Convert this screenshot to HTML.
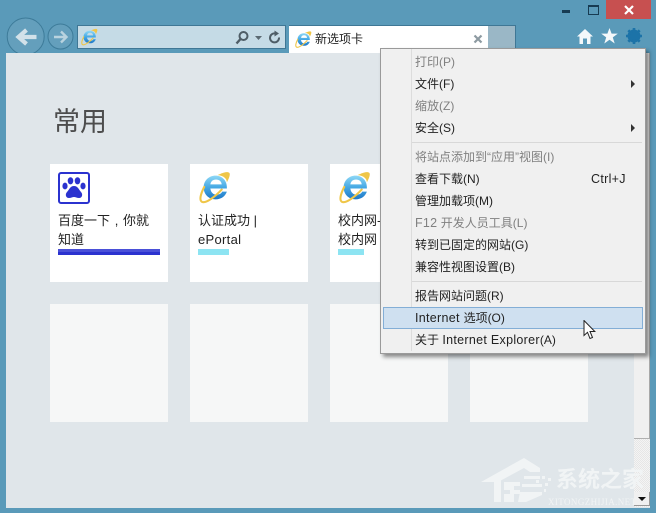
<!DOCTYPE html>
<html><head><meta charset="utf-8">
<style>
html,body{margin:0;padding:0}
body{width:656px;height:513px;overflow:hidden;position:relative;background:#5a9ab9;font-family:"Liberation Sans","Noto Sans CJK SC",sans-serif;color:#222}
.a{position:absolute}
.tile{position:absolute;width:118px;height:118px;background:#fff}
.e{background:#f6f7f7}
.tt{position:absolute;left:8px;top:47px;width:106px;font-size:13px;line-height:19px;color:#222;white-space:nowrap}
.bar{position:absolute;left:8px;top:85px;height:6px}
.m{position:absolute;left:415px;font-size:12px;line-height:18px;color:#222;white-space:nowrap}
.l{font-size:12.500px;letter-spacing:.3px}
.d{color:#808080}
.s{position:absolute;left:412px;width:230px;height:1px;background:#d8d8d8}
.ar{position:absolute;left:631px;width:0;height:0;border-left:4px solid #333;border-top:4px solid transparent;border-bottom:4px solid transparent}
</style></head><body>
<svg width="1" height="1" style="position:absolute;left:0;top:0"><defs>
<linearGradient id="eg" x1="0" y1="0" x2="0" y2="1"><stop offset="0" stop-color="#8ed8f5"/><stop offset=".5" stop-color="#45a8e4"/><stop offset="1" stop-color="#1f78c6"/></linearGradient>
<g id="ie">
<path d="M27 16.500H11C11.500 20.500 14 22.500 17 22.500C19.500 22.500 21.500 21.500 22.500 19.500H27C25.500 24 21.500 27 16 27C9.500 27 4.500 22 4.500 15.500C4.500 9 9.500 4 16 4C22.500 4 27 9 27 15C27 15.600 27 16 27 16.500ZM11 12.500H22C21.700 9.500 19.500 7.800 16.500 7.800C13.500 7.800 11.500 9.500 11 12.500Z" fill="url(#eg)" fill-rule="evenodd"/>
<path d="M5 15C1.500 22 0 28 3 29.500C7 31 16 24 22 17.500" fill="none" stroke="#efc648" stroke-width="2" stroke-linecap="round"/>
<path d="M18 3.500C23 1 28 -0.500 29.500 1.500C30.500 3 29 7 27 10.500C27 7 24 4 18 3.500Z" fill="#efc648"/>
</g>
</defs></svg>

<!-- nav (sits under the content sheet) -->
<svg class="a" style="left:0;top:10px" width="80" height="45" viewBox="0 0 80 45">
<circle cx="25.700" cy="26.500" r="18.500" fill="#649fbc" stroke="#3d7b99" stroke-width="1"/>
<circle cx="60.500" cy="26.500" r="12.500" fill="#649fbc" stroke="#3d7b99" stroke-width="1"/>
<path d="M36.500 28H20M26.500 21L18.500 28L26.500 35" fill="none" stroke="#d2e1e9" stroke-width="4.200" transform="translate(0,-1)"/>
<path d="M54 27H66M61 21.500L66.500 27L61 32.500" fill="none" stroke="#b9d3df" stroke-width="2.400"/>
</svg>

<!-- content -->
<div class="a" style="left:6px;top:53px;width:644px;height:455px;background:#e0e6ea"></div>
<div class="a" style="left:53px;top:103px;font-size:27px;line-height:38px;color:#4d4d4d">常用</div>

<div class="tile" style="left:50px;top:164px">
<svg class="a" style="left:8px;top:8px" width="32" height="32" viewBox="0 0 32 32">
<rect x="1" y="1" width="30" height="30" rx="2" fill="#fff" stroke="#2b32cf" stroke-width="2"/>
<g fill="#2b32cf"><ellipse cx="7" cy="14" rx="2.600" ry="3.400"/><ellipse cx="12.500" cy="8.800" rx="2.800" ry="3.600"/><ellipse cx="19.500" cy="8.800" rx="2.800" ry="3.600"/><ellipse cx="25" cy="14" rx="2.600" ry="3.400"/><path d="M16 14C12 14 11 18 9 20C7 22 7.500 26 11 26C13 26 14.500 25 16 25C17.500 25 19 26 21 26C24.500 26 25 22 23 20C21 18 20 14 16 14Z"/></g>
</svg>
<div class="tt">百度一下<span style="display:inline-block;width:13px;text-align:center">,</span>你就<br>知道</div>
<div class="bar" style="width:102px;background:linear-gradient(#4a50d8 50%,#2b32cf 50%)"></div>
</div>
<div class="tile" style="left:190px;top:164px">
<svg class="a" style="left:9px;top:7px" width="32" height="33" viewBox="0 0 31 31"><use href="#ie"/></svg>
<div class="tt">认证成功 |<br><span style="letter-spacing:.3px">ePortal</span></div>
<div class="bar" style="width:31px;background:#8de4f2"></div>
</div>
<div class="tile" style="left:330px;top:164px;overflow:hidden">
<svg class="a" style="left:9px;top:7px" width="32" height="33" viewBox="0 0 31 31"><use href="#ie"/></svg>
<div class="tt">校内网-<br>校内网</div>
<div class="bar" style="width:26px;background:#8de4f2"></div>
</div>
<div class="tile" style="left:470px;top:164px"></div>
<div class="tile e" style="left:50px;top:304px"></div>
<div class="tile e" style="left:190px;top:304px"></div>
<div class="tile e" style="left:330px;top:304px"></div>
<div class="tile e" style="left:470px;top:304px"></div>

<!-- scrollbar -->
<div class="a" style="left:634px;top:53px;width:16px;height:454px;background:repeating-conic-gradient(#e6e6e6 0 25%,#f4f4f4 0 50%) 0 0/2px 2px"></div>
<div class="a" style="left:634px;top:53px;width:15px;height:385px;background:#f0f0f0;border-right:1px solid #a8a8a8;border-bottom:1px solid #b0b0b0"></div>
<div class="a" style="left:634px;top:492px;width:15px;height:13px;background:#f0f0f0;border-right:1px solid #999;border-bottom:1px solid #999"></div>

<!-- watermark -->
<svg class="a" style="left:480px;top:456px" width="76" height="50" viewBox="0 0 76 50" fill="#f1f4f5">
<path d="M1 26L44 2L60 12V16H50L44 12L18 26Z"/>
<path d="M14 24H21V46H14Z"/>
<path d="M24 26H40V30H34V34H40V38H34V46H24V38H30V34H24V30H24Z"/>
<path d="M44 20H60V23H44ZM42 28H62V31H42ZM40 36H62V39L46 46H38Z"/>
<rect x="56" y="24" width="3" height="3"/><rect x="62" y="20" width="3" height="3"/><rect x="65" y="27" width="3" height="3"/><rect x="64" y="33" width="2" height="3"/><rect x="68" y="22" width="3" height="3"/>
</svg>
<div class="a" style="left:556px;top:467px;font-size:22px;line-height:26px;font-weight:bold;color:#f1f4f5;white-space:nowrap">系统之家</div>
<div class="a" style="left:548px;top:497px;font-family:'Liberation Serif',serif;font-size:9px;line-height:10px;color:#f1f4f5;white-space:nowrap;letter-spacing:.4px">XITONGZHIJIA.NET</div>
<div class="a" style="left:638px;top:497px;width:0;height:0;border-top:4px solid #111;border-left:4px solid transparent;border-right:4px solid transparent"></div>

<!-- address -->
<div class="a" style="left:77px;top:25px;width:207px;height:22px;background:#c5dbe6;border:1px solid #3f7795"></div>
<svg class="a" style="left:81px;top:28px" width="17" height="18" viewBox="0 0 31 31"><use href="#ie"/></svg>
<svg class="a" style="left:234px;top:29px" width="50" height="18" viewBox="0 0 50 18">
<circle cx="9.500" cy="7" r="4" fill="none" stroke="#4e5d66" stroke-width="2"/>
<path d="M6.500 10L2.500 14.500" stroke="#4e5d66" stroke-width="2.400"/>
<path d="M21 7H28L24.500 11Z" fill="#5b6a73"/>
<path d="M45 8.500A4.500 4.500 0 1 1 41.500 4.500" fill="none" stroke="#4e5d66" stroke-width="2"/>
<path d="M40.500 1.500L45 4.500L40.500 7.500Z" fill="#4e5d66"/>
</svg>

<!-- tab -->
<div class="a" style="left:289px;top:25px;width:199px;height:28px;background:#fff;border-top:1px solid #3f7795;box-sizing:border-box"></div>
<svg class="a" style="left:295px;top:31px" width="17" height="17" viewBox="0 0 31 31"><use href="#ie"/></svg>
<div class="a" style="left:315px;top:30px;font-size:12px;line-height:18px;color:#222">新选项卡</div>
<svg class="a" style="left:473px;top:34px" width="10" height="10" viewBox="0 0 10 10"><path d="M1.500 1.500L8.500 8.500M8.500 1.500L1.500 8.500" stroke="#8d9aa1" stroke-width="2.200"/></svg>
<div class="a" style="left:488px;top:25px;width:27px;height:27px;background:#9ab7c6;border:1px solid #3f7795;border-left:0;border-bottom:0"></div>

<!-- window controls -->
<div class="a" style="left:562px;top:10px;width:8px;height:2.500px;background:#173b52"></div>
<div class="a" style="left:588px;top:5px;width:9px;height:7px;border:1px solid #173b52;border-top:2px solid #173b52"></div>
<div class="a" style="left:606px;top:0;width:45px;height:19px;background:#c75050"></div>
<svg class="a" style="left:624px;top:5px" width="10" height="10" viewBox="0 0 10 10"><path d="M1 1L9 9M9 1L1 9" stroke="#fff" stroke-width="2.200"/></svg>

<!-- toolbar icons -->
<svg class="a" style="left:577px;top:29px" width="16" height="15" viewBox="0 0 16 15" fill="#f4f8fa"><path d="M8 0L16 7.500H13.500V15H10V9.500H6V15H2.500V7.500H0Z"/></svg>
<svg class="a" style="left:601px;top:28px" width="17" height="16" viewBox="0 0 17 16" fill="#f4f8fa"><path d="M8.500 0L10.600 5.600H16.800L11.800 9.400L13.700 15.500L8.500 11.800L3.300 15.500L5.200 9.400L.2 5.600H6.400Z"/></svg>
<svg class="a" style="left:626px;top:28px" width="16" height="16" viewBox="0 0 16 16"><circle cx="8" cy="8" r="4.800" fill="none" stroke="#1c73a8" stroke-width="3.400"/><path d="M8 0V16M0 8H16M2.300 2.300L13.700 13.700M13.700 2.300L2.300 13.700" stroke="#1c73a8" stroke-width="2.600"/></svg>

<!-- menu -->
<div class="a" style="left:380px;top:48px;width:264px;height:304px;background:#f0f0f0;border:1px solid #9a9a9a;box-shadow:3px 3px 4px rgba(0,0,0,.45)"></div>
<div class="a" style="left:411px;top:49px;width:1px;height:302px;background:#dcdcdc"></div>
<div class="a" style="left:383px;top:307px;width:258px;height:20px;background:#cfe0f0;border:1px solid #83aed6"></div>
<div class="s" style="top:142px"></div>
<div class="s" style="top:281px"></div>
<div class="m d" style="top:53px">打印(P)</div>
<div class="m" style="top:75px">文件(F)</div>
<div class="m d" style="top:97px">缩放(Z)</div>
<div class="m" style="top:119px">安全(S)</div>
<div class="ar" style="top:80px"></div>
<div class="ar" style="top:124px"></div>
<div class="m d" style="top:148px">将站点添加到“应用”视图(I)</div>
<div class="m" style="top:170px">查看下载(N)</div>
<div class="m l" style="top:170px;left:591px">Ctrl+J</div>
<div class="m" style="top:192px">管理加载项(M)</div>
<div class="m d" style="top:214px"><span class="l">F12</span> 开发人员工具(L)</div>
<div class="m" style="top:236px">转到已固定的网站(G)</div>
<div class="m" style="top:258px">兼容性视图设置(B)</div>
<div class="m" style="top:287px">报告网站问题(R)</div>
<div class="m" style="top:309px"><span class="l">Internet </span>选项(O)</div>
<div class="m" style="top:331px">关于 <span class="l">Internet Explorer</span>(A)</div>

<!-- cursor -->
<svg class="a" style="left:583px;top:320px" width="13" height="20" viewBox="0 0 13 20"><path d="M1 .5V15.500L4.500 12.300L7 18.500L9.500 17.500L7 11.500H11.800Z" fill="#fff" stroke="#222" stroke-width="1"/></svg>
</body></html>
